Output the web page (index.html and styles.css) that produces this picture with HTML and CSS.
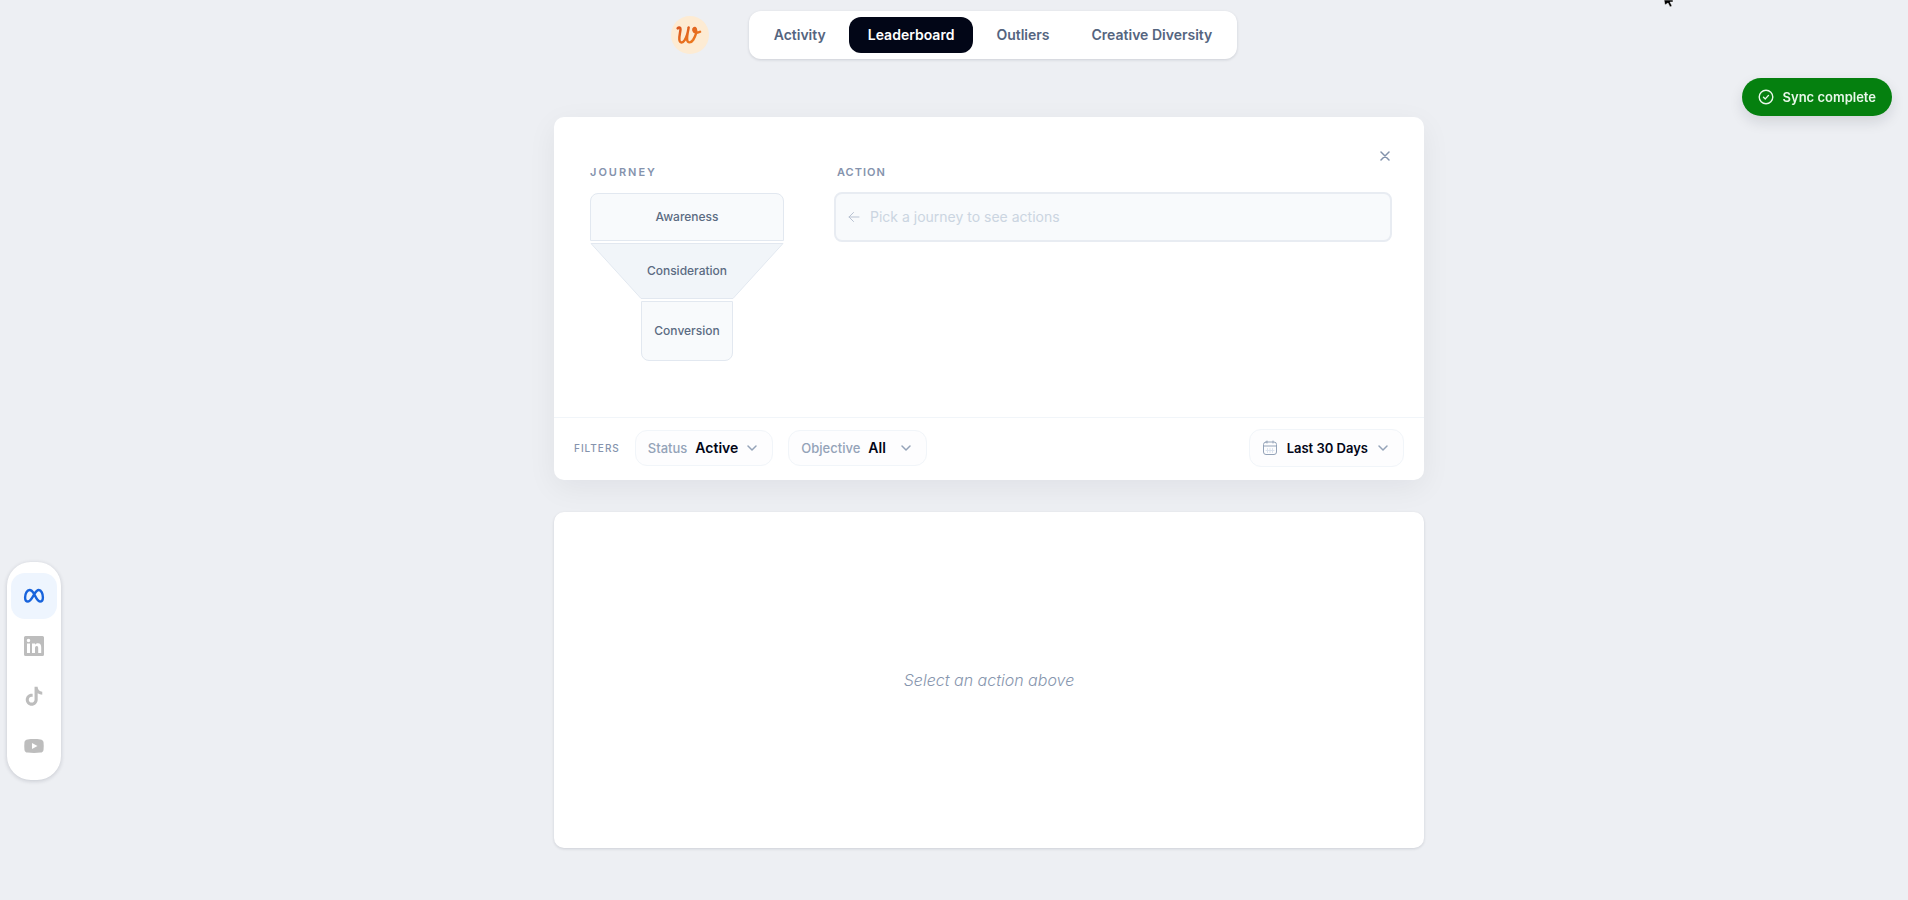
FILE: index.html
```html
<!DOCTYPE html>
<html lang="en">

<head>
    <meta charset="utf-8">
    <meta name="viewport" content="width=device-width, initial-scale=1">
    <title>Leaderboard</title>
    <link rel="stylesheet" href="styles.css">
</head>

<body>

    <header class="topbar">
        <a class="logo" href="#" aria-label="Home">
            <svg viewBox="-1 -1 40 40" width="38" height="38" fill="none" stroke-linecap="round" stroke-linejoin="round">
                <defs>
                    <linearGradient id="logo-ink" x1="0" y1="0" x2="1" y2="1">
                        <stop offset="0" stop-color="#d9541e"/>
                        <stop offset="1" stop-color="#f0801f"/>
                    </linearGradient>
                </defs>
                <path d="M6 12c1-1.200 3-1.400 3 .6 0 3-1.600 7.400-1.200 11.400.4 3.600 3.600 3.800 5.800.2 2.200-3.800 3.400-8.800 4-13.200-.8 4.400-2 9-1.600 13 .4 3.600 4 3.800 6.400 0 2.400-4 3.800-8.600 2.600-11.600-1-1.800-3-.4-2.400 1.800.6 2.400 3.800 3.200 7 1.400" stroke="url(#logo-ink)" stroke-width="2.600"/>
            </svg>
        </a>
        <nav class="tabs">
            <a href="#">Activity</a>
            <a href="#" class="active" aria-current="page">Leaderboard</a>
            <a href="#">Outliers</a>
            <a href="#">Creative Diversity</a>
        </nav>
    </header>

    <aside class="platforms">
        <button class="active" aria-label="Meta">
            <svg viewBox="0 0 24 24" width="22" height="22" fill="none" stroke="#1763dc" stroke-width="2.600" stroke-linejoin="round">
                <path d="M12 9.500C10.500 7 9 5.500 7.200 5.500 4.300 5.500 2.300 9.500 2.300 13.500c0 2.700 1.100 4.500 3.200 4.500 2.500 0 4.300-3.500 6.500-7.500 2-3.300 3-5 5.200-5 2.800 0 4.500 4 4.500 8 0 2.700-1.100 4.500-3.200 4.500-2.500 0-4-3.500-6.500-8.500z"/>
            </svg>
        </button>
        <button aria-label="LinkedIn">
            <svg viewBox="0 0 24 24" width="24" height="24" fill="#bdbdbd">
                <path fill-rule="evenodd" d="M3.500 2h17A1.500 1.500 0 0 1 22 3.500v17a1.500 1.500 0 0 1-1.500 1.500h-17A1.500 1.500 0 0 1 2 20.500v-17A1.500 1.500 0 0 1 3.500 2zM5 9.600V19h3V9.600zM6.500 4.800a1.750 1.750 0 1 0 0 3.500 1.750 1.750 0 0 0 0-3.500zM10 9.600V19h3v-4.700c0-1.300.4-2.300 1.700-2.300s1.500 1.100 1.500 2.400V19h3v-5.300c0-2.600-.7-4.400-3.300-4.400-1.400 0-2.300.7-2.800 1.500V9.600z"/>
            </svg>
        </button>
        <button aria-label="TikTok">
            <svg viewBox="0 0 24 24" width="22" height="22" fill="#bdbdbd">
                <path d="M16 2h-3.400v14c0 1.700-1.300 3.200-3.100 3.200S6.300 17.800 6.300 16s1.400-3.200 3.200-3.200c.4 0 .7.100 1 .2V9.600c-.3 0-.7-.1-1-.1C6 9.500 3 12.400 3 16s3 6.600 6.500 6.600S16 19.600 16 16V9c1.500 1 3.200 1.600 5 1.600V7.300c-2.800 0-5-2.300-5-5.300z"/>
            </svg>
        </button>
        <button aria-label="YouTube">
            <svg viewBox="0 0 24 24" width="22" height="22" fill="#bdbdbd">
                <path fill-rule="evenodd" d="M5 4.800c4.500-.5 9.500-.5 14 0 2 .2 3.200 1.400 3.400 3.200.3 2.700.3 5.300 0 8-.2 1.800-1.400 3-3.400 3.200-4.500.5-9.500.5-14 0-2-.2-3.200-1.400-3.400-3.200-.3-2.700-.3-5.300 0-8C1.800 6.200 3 5 5 4.800zM9.800 8.600v6.800l6-3.400z"/>
            </svg>
        </button>
    </aside>

    <main class="content">
        <section class="card picker">
            <div class="picker-body">
                <div class="journey">
                    <h2>Journey</h2>
                    <div class="funnel">
                        <button class="stage awareness">Awareness</button>
                        <button class="stage consideration">
                            <svg viewBox="0 0 194 56" preserveAspectRatio="none">
                                <path d="M1 .5H193L143 55.500H51z" fill="#f1f5f9" stroke="#e2e8f0"/>
                            </svg>
                            <span>Consideration</span>
                        </button>
                        <button class="stage conversion">Conversion</button>
                    </div>
                </div>
                <div class="action">
                    <h2>Action</h2>
                    <div class="action-empty">
                        <svg viewBox="0 0 12 12" width="12" height="12" fill="none" stroke="currentColor" stroke-linecap="round" stroke-linejoin="round">
                            <path d="M11 6H1M5.500 1.500 1 6l4.500 4.500"/>
                        </svg>
                        Pick a journey to see actions
                    </div>
                </div>
                <button class="close" aria-label="Close">
                    <svg viewBox="0 0 10 10" width="10" height="10" stroke="currentColor" stroke-width="1.500" stroke-linecap="round">
                        <path d="M1 1l8 8M9 1L1 9"/>
                    </svg>
                </button>
            </div>

            <div class="filters">
                <h3>Filters</h3>
                <div class="filter">
                    <label for="status">Status</label>
                    <select id="status">
                        <option>Active</option>
                    </select>
                    <svg class="chevron" viewBox="0 0 12 12" width="12" height="12">
                        <path d="M2 4l4 4 4-4"/>
                    </svg>
                </div>
                <div class="filter">
                    <label for="objective">Objective</label>
                    <select id="objective">
                        <option>All</option>
                    </select>
                    <svg class="chevron" viewBox="0 0 12 12" width="12" height="12">
                        <path d="M2 4l4 4 4-4"/>
                    </svg>
                </div>
                <button class="date-range">
                    <svg viewBox="0 0 16 16" width="16" height="16" fill="none" stroke="#94a3b8" stroke-linecap="round">
                        <rect x="1.500" y="2" width="13" height="12.500" rx="2.500"/>
                        <path d="M1.500 6h13M5 1v2M11 1v2"/>
                        <path d="M5.500 8.500v4M8 8.500v4M10.500 8.500v4M4 10.500h8" stroke="#dbe3ee"/>
                    </svg>
                    Last 30 Days
                    <svg class="chevron" viewBox="0 0 12 12" width="12" height="12">
                        <path d="M2 4l4 4 4-4"/>
                    </svg>
                </button>
            </div>
        </section>

        <section class="card results">
            <p>Select an action above</p>
        </section>
    </main>

    <div class="toast" role="status">
        <svg viewBox="0 0 16 16" width="16" height="16" fill="none" stroke="currentColor" stroke-width="1.400" stroke-linecap="round" stroke-linejoin="round">
            <circle cx="8" cy="8" r="6.800"/>
            <path d="M5.500 8.200l1.800 1.700 3.200-3.500"/>
        </svg>
        Sync complete
    </div>

    <svg class="pointer" viewBox="0 0 10 9" width="10" height="9">
        <path d="M0 0h9v2H6l2 4-2 1-2-4-3 2z" stroke="#fff" stroke-width=".5"/>
    </svg>

</body>

</html>
```

FILE: styles.css
```css
* {
    box-sizing: border-box;
}

body {
    margin: 0;
    min-height: 100vh;
    background: #edeff3;
    color: #020617;
    font-family: 'Inter', sans-serif;
    font-size: 14px;
    line-height: 20px;
}

button,
select {
    margin: 0;
    padding: 0;
    border: none;
    background: none;
    color: inherit;
    font: inherit;
    cursor: pointer;
}

svg {
    display: block;
    flex-shrink: 0;
}

h2,
h3,
p {
    margin: 0;
}

.topbar {
    display: flex;
    justify-content: center;
    align-items: center;
    gap: 40px;
    padding-top: 11px;
}

.logo {
    border-radius: 50%;
    background: #fdebd3;
}

.tabs {
    display: flex;
    align-items: center;
    gap: 4px;
    height: 48px;
    padding: 0 6px;
    border-radius: 12px;
    background: #fff;
    box-shadow: 0 1px 3px rgb(15 23 42 / 14%);
}

.tabs a {
    padding: 8px 19px;
    border-radius: 12px;
    color: #55657f;
    font-weight: 600;
    text-decoration: none;
}

.tabs a.active {
    background: #020617;
    color: #fff;
}

.platforms {
    position: fixed;
    top: 562px;
    left: 7px;
    display: flex;
    flex-direction: column;
    gap: 4px;
    padding: 11px 4px;
    border-radius: 24px;
    background: #fff;
    box-shadow: 0 1px 4px rgb(15 23 42 / 18%);
}

.platforms button {
    display: flex;
    justify-content: center;
    align-items: center;
    width: 46px;
    height: 46px;
    border-radius: 14px;
}

.platforms button.active {
    background: #eef5fe;
}

.content {
    display: flex;
    flex-direction: column;
    gap: 32px;
    max-width: 940px;
    margin: 58px auto 0;
    padding-left: 70px;
}

.card {
    border-radius: 10px;
    background: #fff;
}

.picker {
    box-shadow: 0 8px 30px rgb(15 23 42 / 6%);
}

.picker-body {
    position: relative;
    display: flex;
    gap: 50px;
    min-height: 301px;
    padding: 45px 32px 0 36px;
    border-bottom: 1px solid #f1f5f9;
}

.picker h2 {
    padding-bottom: 10px;
    color: #8593ad;
    font-size: 11px;
    font-weight: 600;
    text-transform: uppercase;
}

.journey {
    width: 194px;
}

.journey h2 {
    letter-spacing: 2px;
}

.funnel {
    display: flex;
    flex-direction: column;
    align-items: center;
    gap: 2px;
    padding-top: 1px;
}

.stage {
    border: 1px solid #e2e8f0;
    background: #f8fafc;
    color: #5b6b82;
    font-size: 12px;
    font-weight: 500;
}

.awareness {
    width: 100%;
    height: 48px;
    border-radius: 8px 8px 0 0;
}

.consideration {
    position: relative;
    width: 100%;
    height: 56px;
    border: none;
    background: none;
}

.consideration svg {
    position: absolute;
    inset: 0;
    width: 100%;
    height: 100%;
}

.consideration span {
    position: relative;
}

.conversion {
    width: 92px;
    height: 60px;
    border-radius: 0 0 8px 8px;
}

.action {
    flex: 1;
}

.action h2 {
    padding-left: 3px;
    letter-spacing: 1px;
}

.action-empty {
    display: flex;
    align-items: center;
    gap: 10px;
    height: 50px;
    padding: 0 12px;
    border: 2px solid #e8ecf2;
    border-radius: 8px;
    background: #f8fafc;
    color: #cbd5e1;
}

.action-empty svg {
    color: #b9c2d2;
}

.close {
    position: absolute;
    top: 29px;
    right: 29px;
    padding: 5px;
    color: #8292ab;
}

.filters {
    display: flex;
    align-items: center;
    gap: 15px;
    height: 62px;
    padding: 0 20px 2px;
}

.filters h3 {
    color: #8593ad;
    font-size: 10px;
    font-weight: 500;
    letter-spacing: 1px;
    text-transform: uppercase;
}

.filter,
.date-range {
    display: flex;
    align-items: center;
    height: 36px;
    padding: 0 14px 0 12px;
    border: 1px solid #f1f5f9;
    border-radius: 12px;
    background: #fdfdfe;
}

.filter label {
    margin-right: 8px;
    color: #94a3b8;
    font-size: 13px;
    font-weight: 500;
}

.filter select {
    appearance: none;
    min-width: 24px;
    margin-right: 8px;
    font-weight: 600;
    field-sizing: content;
}

.chevron {
    fill: none;
    stroke: #94a3b8;
    stroke-width: 1.500;
    stroke-linecap: round;
    stroke-linejoin: round;
}

.date-range {
    gap: 9px;
    height: 38px;
    margin-left: auto;
    font-size: 13px;
    font-weight: 600;
}

.results {
    display: flex;
    justify-content: center;
    align-items: center;
    min-height: 336px;
    box-shadow: 0 1px 3px rgb(15 23 42 / 14%);
}

.results p {
    color: #8796ae;
    font-size: 16px;
    font-style: italic;
    font-weight: 300;
}

.toast {
    position: fixed;
    top: 78px;
    right: 16px;
    display: flex;
    align-items: center;
    gap: 9px;
    padding: 9px 16px;
    border-radius: 20px;
    background: #05800f;
    color: #e9f7ea;
    font-size: 13px;
    font-weight: 600;
    box-shadow: 0 6px 14px rgb(15 23 42 / 12%);
}

.pointer {
    position: fixed;
    top: 0;
    left: 1664px;
}
```
